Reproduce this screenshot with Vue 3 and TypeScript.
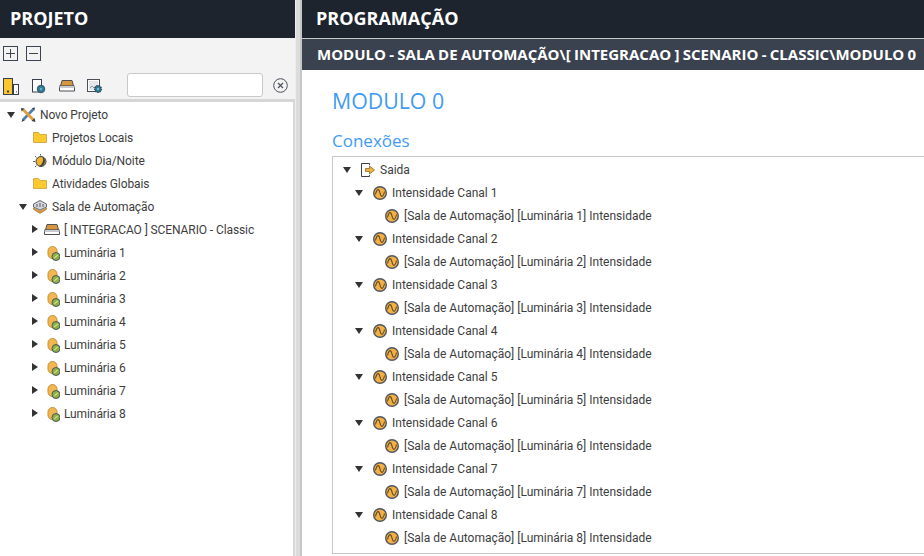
<template>
  <div class="page">
    <aside class="left">
      <header class="title">PROJETO</header>
      <div class="tools">
        <div class="tool-row one">
          <button class="box-btn">
            <svg width="15" height="15" viewBox="0 0 15 15"><rect x=".5" y=".5" width="14" height="14" fill="none" stroke="#3b4454" /><path d="M3 7.500h9M7.500 3v9" stroke="#3b4454" /></svg>
          </button>
          <button class="box-btn">
            <svg width="15" height="15" viewBox="0 0 15 15"><rect x=".5" y=".5" width="14" height="14" fill="none" stroke="#3b4454" /><path d="M3 7.500h9" stroke="#3b4454" /></svg>
          </button>
        </div>
        <div class="tool-row two">
          <svg class="tb" width="18" height="18" viewBox="0 0 18 18">
            <rect x=".5" y="1.500" width="9" height="16" fill="#fcc62d" stroke="#39404d" />
            <rect x="10.500" y="7.500" width="5" height="10" fill="#fff" stroke="#39404d" />
            <rect x="4" y="13.500" width="2" height="2" fill="#39404d" />
            <rect x="13" y="14" width="1" height="1.500" fill="#8a8f98" />
          </svg>
          <svg class="tb" width="18" height="18" viewBox="0 0 18 18">
            <rect x="1.500" y="2.500" width="9" height="12.500" fill="#fff" stroke="#39404d" />
            <circle cx="10" cy="12" r="3.800" fill="#2d7f98" stroke="#39404d" stroke-width=".8" />
            <circle cx="10" cy="12" r="1.200" fill="#6fb0c4" />
          </svg>
          <svg class="tb" width="18" height="18" viewBox="0 0 18 18">
            <path d="M1.500 9 3 3.500h10L14.500 9z" fill="#d8963c" stroke="#4a4f5a" />
            <rect x=".5" y="9" width="15" height="1.500" fill="#fff" stroke="#4a4f5a" stroke-width=".6" />
            <path d="M.5 10.500v3.500h15v-3.500" fill="#fff" stroke="#4a4f5a" />
          </svg>
          <svg class="tb" width="18" height="18" viewBox="0 0 18 18">
            <rect x=".5" y="2.500" width="12" height="12" fill="#fff" stroke="#4a4f5a" />
            <rect x="2" y="4" width="9" height="9" fill="#e4e6ea" />
            <path d="M3 11l2-2 2 2 2-2" fill="none" stroke="#7b828e" stroke-width=".8" />
            <circle cx="11" cy="12" r="3.400" fill="#2b7c99" stroke="#39404d" stroke-width="1.200" stroke-dasharray="1.500 .8" />
            <circle cx="11" cy="12" r="1" fill="#9fcbd8" />
          </svg>
          <input class="search" type="text" />
          <svg class="clear" width="15" height="15" viewBox="0 0 15 15">
            <circle cx="7.500" cy="7.500" r="6.800" fill="none" stroke="#4a4f5a" />
            <path d="M5 5l5 5M10 5l-5 5" stroke="#4a4f5a" stroke-width="1.200" />
          </svg>
        </div>
      </div>
      <div class="tree-wrap">
        <ul class="tree">
          <li v-for="row in projectRows" :key="row.label" class="row" :style="{ paddingLeft: row.indent + 'px' }">
            <span class="caret" :class="row.caret"></span>
            <svg v-if="row.icon === 'tools'" class="ic" viewBox="0 0 16 16">
              <path d="M13.500 2 3 13" stroke="#4c7fae" stroke-width="2.600" />
              <path d="M3 2.500 13.500 13" stroke="#e0a040" stroke-width="3" />
              <path d="M1 1l3.500.5L1.500 4.500zM12 1l3-.5-.5 3zM1.500 15l1-3 2 1.500zM11.500 14l3-3 1 4z" fill="#39404d" />
            </svg>
            <svg v-else-if="row.icon === 'folder'" class="ic" viewBox="0 0 16 16">
              <path d="M1.500 12.500V2.500h5l1.500 2h6.500v8z" fill="#fdc92f" stroke="#d2ad4a" stroke-linejoin="round" />
            </svg>
            <svg v-else-if="row.icon === 'sun'" class="ic" viewBox="0 0 16 16">
              <circle cx="9" cy="8.500" r="5" fill="#f0b429" stroke="#39404d" />
              <path d="M10.500 3.900A5 5 0 0 1 7 13.100 7 7 0 0 0 10.500 3.900z" fill="#39404d" />
              <path d="M1 8.500h2M3 3l1.500 1.500M3 14l1.500-1.500M8.500 1v1.500" stroke="#5a606b" />
            </svg>
            <svg v-else-if="row.icon === 'room'" class="ic" viewBox="0 0 16 16">
              <path d="M8 1.500 14.500 5v3L8 11 1.500 8V5z" fill="#d4d6da" stroke="#636973" />
              <path d="M1.500 9 8 12l6.500-3v1.500L8 14.500l-6.500-4z" fill="#d8963c" stroke="#a8793c" stroke-width=".6" />
              <path d="M5 5v3M8 4v4M11 5v3" stroke="#5a606b" />
            </svg>
            <svg v-else-if="row.icon === 'device'" class="ic" viewBox="0 0 16 16">
              <path d="M1.500 8 3 2.500h10L14.500 8z" fill="#d8963c" stroke="#4a4f5a" />
              <rect x=".5" y="8" width="15" height="1.500" fill="#fff" stroke="#4a4f5a" stroke-width=".6" />
              <path d="M.5 9.500v3h15v-3" fill="#fff" stroke="#4a4f5a" />
            </svg>
            <svg v-else class="ic" viewBox="0 0 16 16">
              <rect x="4" y="1.500" width="9" height="12" rx="4.500" fill="#f4b750" stroke="#c58f3a" />
              <circle cx="12" cy="11.500" r="4" fill="#8cb43c" stroke="#4d5560" />
              <path d="M10.300 12.900 13.700 10.100" stroke="#eef5d8" stroke-width="1" />
            </svg>
            <span>{{ row.label }}</span>
          </li>
        </ul>
      </div>
    </aside>
    <div class="splitter"></div>
    <main class="right">
      <header class="title second">PROGRAMAÇÃO</header>
      <div class="crumb">MODULO - SALA DE AUTOMAÇÃO\[ INTEGRACAO ] SCENARIO - CLASSIC\MODULO 0</div>
      <div class="content">
        <h1>MODULO 0</h1>
        <h2>Conexões</h2>
        <ul class="conn">
          <li class="row root">
            <span class="caret open"></span>
            <svg class="ic" viewBox="0 0 16 16">
              <path d="M9.500 3V1.500H1.500v13h8V13" fill="none" stroke="#39404d" />
              <path d="M5.500 6.500h4V4L14.500 8l-5 4V9.500h-4z" fill="#f1b23e" stroke="#8c6a2c" stroke-width=".8" />
            </svg>
            <span>Saida</span>
          </li>
          <template v-for="n in 8" :key="n">
            <li class="row channel">
              <span class="caret open"></span>
              <svg class="ic" viewBox="0 0 16 16">
                <circle cx="8" cy="8" r="6.300" fill="#f4b042" stroke="#4f5561" stroke-width="1.400" />
                <path d="M3.500 9.500C5 3 7 3.500 8 8s3 5 4.500-1.500" fill="none" stroke="#5a4a2a" stroke-width="1.100" />
              </svg>
              <span>Intensidade Canal {{ n }}</span>
            </li>
            <li class="row link">
              <svg class="ic" viewBox="0 0 16 16">
                <circle cx="8" cy="8" r="6.300" fill="#f4b042" stroke="#4f5561" stroke-width="1.400" />
                <path d="M3.500 9.500C5 3 7 3.500 8 8s3 5 4.500-1.500" fill="none" stroke="#5a4a2a" stroke-width="1.100" />
              </svg>
              <span>[Sala de Automação] [Luminária {{ n }}] Intensidade</span>
            </li>
          </template>
        </ul>
      </div>
    </main>
  </div>
</template>

<script setup lang="ts">
interface ProjectRow {
  label: string
  indent: number
  caret: string
  icon: string
}

const projectRows: ProjectRow[] = [
  { label: 'Novo Projeto', indent: 6, caret: 'open', icon: 'tools' },
  { label: 'Projetos Locais', indent: 18, caret: 'none', icon: 'folder' },
  { label: 'Módulo Dia/Noite', indent: 18, caret: 'none', icon: 'sun' },
  { label: 'Atividades Globais', indent: 18, caret: 'none', icon: 'folder' },
  { label: 'Sala de Automação', indent: 18, caret: 'open', icon: 'room' },
  { label: '[ INTEGRACAO ] SCENARIO - Classic', indent: 30, caret: 'closed', icon: 'device' },
]

for (let i = 1; i <= 8; i++) {
  projectRows.push({ label: `Luminária ${i}`, indent: 30, caret: 'closed', icon: 'lamp' })
}
</script>

<style>
html,
body {
  overflow: hidden;
}
</style>

<style scoped>
.page {
  display: flex;
  width: 924px;
  height: 556px;
  overflow: hidden;
  background: #fff;
  font-family: Roboto, "Open Sans", sans-serif;
  font-size: 12px;
  color: #3d3d3d;
}
.left {
  width: 295px;
  flex: none;
  display: flex;
  flex-direction: column;
  background: #f3f3f3;
}
.splitter {
  width: 7px;
  flex: none;
  background: linear-gradient(to right, #ededed 1px, #dcdcdc 1px, #dcdcdc 5px, #c6c6c6 5px);
}
.right {
  flex: 1;
  min-width: 0;
  display: flex;
  flex-direction: column;
}
.title {
  height: 38px;
  flex: none;
  box-sizing: border-box;
  padding: 7px 0 0 10px;
  background: #1e242e;
  color: #fff;
  font-family: "Open Sans", sans-serif;
  font-size: 18px;
  font-weight: 700;
  line-height: 22px;
}
.second {
  padding-left: 14px;
  height: 39px;
  border-bottom: 1px solid #c9c9c9;
}
.tools {
  height: 64px;
  flex: none;
  box-sizing: border-box;
  border-bottom: 3px solid #d6d6d6;
}
.tool-row {
  display: flex;
  align-items: center;
}
.one {
  gap: 8px;
  padding: 8px 0 0 3px;
  height: 15px;
}
.two {
  padding: 10px 0 0 3px;
  height: 27px;
}
.box-btn {
  width: 15px;
  height: 15px;
  padding: 0;
  border: 0;
  background: none;
  display: block;
}
.tb {
  margin: 2px 10px 0 0;
  flex: none;
}
.search {
  width: 136px;
  height: 24px;
  box-sizing: border-box;
  margin-left: 12px;
  padding: 0 4px;
  border: 1px solid #c8c8c8;
  border-radius: 3px;
  background: #fff;
  outline: none;
}
.clear {
  margin: 1px 0 0 10px;
}
.tree-wrap {
  flex: 1;
  min-height: 0;
  background: #fff;
  border-right: 2px solid #d8d8d8;
  letter-spacing: -0.1px;
}
.tree,
.conn {
  list-style: none;
  margin: 0;
  padding: 0;
}
.tree {
  padding-top: 1px;
}
.row {
  display: flex;
  align-items: center;
  height: 23px;
  white-space: nowrap;
}
.caret {
  width: 14px;
  height: 10px;
  flex: none;
  position: relative;
}
.conn .caret {
  width: 18px;
}
.caret.open::before {
  content: "";
  position: absolute;
  left: 1px;
  top: 2px;
  border-left: 4.500px solid transparent;
  border-right: 4.500px solid transparent;
  border-top: 6px solid #333;
}
.caret.closed::before {
  content: "";
  position: absolute;
  left: 2px;
  top: 0.500px;
  border-top: 4.500px solid transparent;
  border-bottom: 4.500px solid transparent;
  border-left: 6px solid #333;
}
.ic {
  width: 16px;
  height: 16px;
  flex: none;
  margin-right: 4px;
}
.crumb {
  height: 31px;
  flex: none;
  box-sizing: border-box;
  padding-left: 15px;
  background: #3a4250;
  color: #fff;
  font-family: "Open Sans", sans-serif;
  font-size: 15px;
  font-weight: 700;
  word-spacing: -0.6px;
  line-height: 30px;
  white-space: nowrap;
  overflow: hidden;
}
.content {
  flex: 1;
  min-height: 0;
  padding-left: 30px;
}
h1 {
  margin: 0;
  padding-top: 17px;
  font-family: "Open Sans", sans-serif;
  font-size: 21.300px;
  font-weight: 400;
  line-height: 28px;
  color: #3f9bf5;
}
h2 {
  margin: 0;
  padding-top: 14px;
  padding-bottom: 3px;
  font-family: "Open Sans", sans-serif;
  font-size: 17px;
  font-weight: 400;
  line-height: 24px;
  color: #3f9bf5;
}
.conn {
  box-sizing: border-box;
  height: 398px;
  width: 640px;
  padding-top: 1px;
  border: 1px solid #c8c8c8;
}
.root {
  padding-left: 9px;
}
.channel {
  padding-left: 21px;
}
.link {
  padding-left: 51px;
}
</style>
